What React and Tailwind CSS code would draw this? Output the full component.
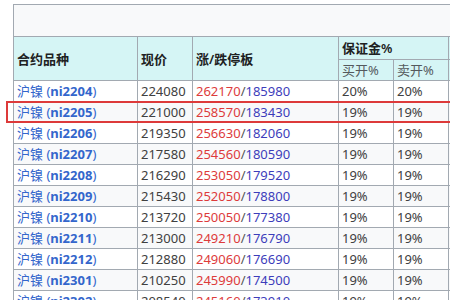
import React from "react";

const rows = [
  ["ni2204", "224080", "262170", "185980", "20%", "20%"],
  ["ni2205", "221000", "258570", "183430", "19%", "19%"],
  ["ni2206", "219350", "256630", "182060", "19%", "19%"],
  ["ni2207", "217580", "254560", "180590", "19%", "19%"],
  ["ni2208", "216290", "253050", "179520", "19%", "19%"],
  ["ni2209", "215430", "252050", "178800", "19%", "19%"],
  ["ni2210", "213720", "250050", "177380", "19%", "19%"],
  ["ni2211", "213000", "249210", "176790", "19%", "19%"],
  ["ni2212", "212880", "249060", "176690", "19%", "19%"],
  ["ni2301", "210250", "245990", "174500", "19%", "19%"],
  ["ni2302", "208540", "245160", "173910", "19%", "19%"],
];

const cell = "border border-[#a2a9b1] px-[3px] h-[21px] leading-[20px] whitespace-nowrap";

export default function App() {
  return (
    <div
      className="relative w-[450px] h-[300px] overflow-hidden bg-white text-[13px] text-[#202122]"
      style={{ fontFamily: '"Noto Sans", "Noto Sans CJK SC", sans-serif' }}
    >
      <div className="pt-[4px] pl-[13px]">
        <table className="border-collapse table-fixed w-[460px]">
          <colgroup>
            <col className="w-[124px]" />
            <col className="w-[55px]" />
            <col className="w-[146px]" />
            <col className="w-[55px]" />
            <col className="w-[55px]" />
            <col className="w-[25px]" />
          </colgroup>
          <thead>
            <tr>
              <td colSpan={6} className="border border-[#a2a9b1] bg-[#f8f9fa] h-[32px]" />
            </tr>
            <tr className="bg-[#d5f5f5]">
              <th rowSpan={2} className={`${cell} text-left font-semibold`}>合约品种</th>
              <th rowSpan={2} className={`${cell} text-left font-semibold`}>现价</th>
              <th rowSpan={2} className={`${cell} text-left font-semibold`}>涨/跌停板</th>
              <th colSpan={2} className={`${cell} text-left font-semibold h-[23px]`}>保证金%</th>
              <th className={`${cell} h-[23px]`} />
            </tr>
            <tr className="bg-[#d5f5f5]">
              <th className={`${cell} text-left font-normal text-[#54595d]`}>买开%</th>
              <th className={`${cell} text-left font-normal text-[#54595d]`}>卖开%</th>
              <th className={cell} />
            </tr>
          </thead>
          <tbody>
            {rows.map((r, i) => (
              <tr key={r[0]} className={i % 2 === 1 ? "bg-[#f8f9fa]" : "bg-white"}>
                <td className={cell}>
                  <span className="text-[#3366cc]">沪镍 (</span>
                  <span className="text-[#3366cc] font-bold">{r[0]}</span>
                  <span className="text-[#3366cc]">)</span>
                </td>
                <td className={`${cell} text-[#404040]`}>{r[1]}</td>
                <td className={cell}>
                  <span className="text-[#dd3b3b]">{r[2]}</span>
                  <span className="text-[#555]">/</span>
                  <span className="text-[#3d3dbb]">{r[3]}</span>
                </td>
                <td className={`${cell} text-[#404040]`}>{r[4]}</td>
                <td className={`${cell} text-[#404040]`}>{r[5]}</td>
                <td className={cell} />
              </tr>
            ))}
          </tbody>
        </table>
      </div>
      <div className="absolute left-[6px] top-[101px] w-[460px] h-[22px] border-2 border-[#dd3a3a]" />
    </div>
  );
}
